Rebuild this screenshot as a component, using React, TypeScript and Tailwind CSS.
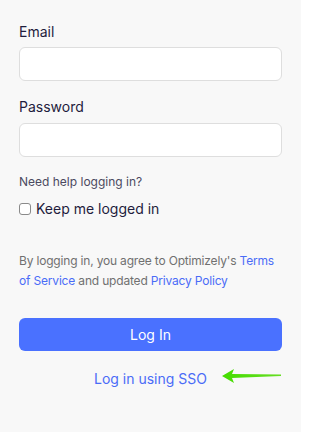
import React from "react";

export default function App() {
  return (
    <div className="min-h-[432px] w-[301px] bg-[#f8f8f8] px-[19px] pt-[22px] text-[#1f1d3d]" style={{ fontFamily: "Inter, 'Noto Sans', sans-serif" }}>
      <label className="block text-[14px] leading-[20px]">Email</label>
      <input className="mt-[5px] block h-[34px] w-full rounded-[6px] border border-[#dedede] bg-white" />
      <label className="mt-[16px] block text-[14px] leading-[20px]">Password</label>
      <input type="password" className="mt-[6px] block h-[34px] w-full rounded-[6px] border border-[#dedede] bg-white" />
      <div className="mt-[17px] text-[12px] leading-[16px] text-[#4b4a60]">Need help logging in?</div>
      <label className="mt-[9px] flex items-center gap-[5px] text-[14px] leading-[20px]">
        <span className="block h-[12px] w-[12px] rounded-[3px] border border-[#8a8a8a] bg-white" />
        <span>Keep me logged in</span>
      </label>
      <p className="mt-[32px] text-[12px] leading-[20px] tracking-[-0.18px] text-[#707070]">
        By logging in, you agree to Optimizely's <span className="text-[#4a6cf7]">Terms of Service</span> and updated <span className="text-[#4a6cf7]">Privacy Policy</span>
      </p>
      <button className="mt-[27px] flex h-[33px] w-full items-center justify-center rounded-[6px] bg-[#4a71ff] text-[14px] text-white">Log In</button>
      <div className="relative mt-[18px] flex justify-center">
        <span className="text-[14px] leading-[20px] text-[#4a6cf7]">Log in using SSO</span>
        <svg className="absolute left-[202px] top-[-2px]" width="62" height="18" viewBox="0 0 62 18">
          <defs>
            <linearGradient id="g" x1="0" x2="1" y1="0" y2="0">
              <stop offset="0" stopColor="#44dd00" />
              <stop offset="1" stopColor="#66dd22" />
            </linearGradient>
          </defs>
          <path d="M1 9 L13 2 L11 7 L60 7.6 L60 9 L11 11 L13 16 Z" fill="url(#g)" />
        </svg>
      </div>
    </div>
  );
}
